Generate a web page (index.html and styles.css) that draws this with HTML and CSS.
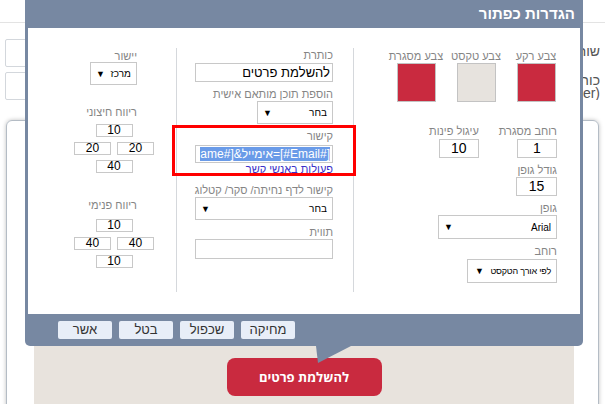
FILE: index.html
```html
<!DOCTYPE html>
<html lang="he" dir="rtl">
<head>
<meta charset="utf-8">
<title>הגדרות כפתור</title>
<link rel="stylesheet" href="styles.css">
</head>
<body>
<div class="page">
  <div class="topbar"></div>
  <div class="formarea">
    <div class="flabels">
      <div class="fl1">שורת נושא</div>
      <div class="fl2">כותרת<br>(placeholder)</div>
    </div>
    <div class="finputs">
      <div class="finput"></div>
      <div class="finput"></div>
    </div>
  </div>
  <div class="card">
    <div class="preview">
      <div class="cta">להשלמת פרטים</div>
    </div>
  </div>
</div>

<div class="modal">
  <div class="mhead">הגדרות כפתור</div>
  <div class="mbody">
    <div class="col colr">
      <div class="swatches">
        <div class="sw"><span class="lbl">צבע רקע</span><span class="chip red"></span></div>
        <div class="sw"><span class="lbl">צבע טקסט</span><span class="chip beige"></span></div>
        <div class="sw"><span class="lbl">צבע מסגרת</span><span class="chip red"></span></div>
      </div>
      <div class="pair">
        <div class="fld"><span class="lbl">רוחב מסגרת</span><div class="inp num">1</div></div>
        <div class="fld"><span class="lbl">עיגול פינות</span><div class="inp num">10</div></div>
      </div>
      <div class="fld f-size"><span class="lbl">גודל גופן</span><div class="inp num">15</div></div>
      <div class="fld f-font"><span class="lbl">גופן</span><div class="inp sel sel-font"><span>Arial</span><i>▼</i></div></div>
      <div class="fld f-width"><span class="lbl">רוחב</span><div class="inp sel sel-width"><span>לפי אורך הטקסט</span><i>▼</i></div></div>
    </div>

    <div class="col colm">
      <span class="lbl">כותרת</span>
      <div class="inp tinp">להשלמת פרטים</div>
      <span class="lbl m-add">הוספת תוכן מותאם אישית</span>
      <div class="inp sel sel-add"><span>בחר</span><i>▼</i></div>
      <div class="linkbox">
        <span class="lbl">קישור</span>
        <div class="inp linkinp"><span class="hl">ame#]&amp;אימייל=[#Email#]</span></div>
        <div class="actions">פעולות באנשי קשר</div>
      </div>
      <span class="lbl m-landing">קישור לדף נחיתה/ סקר/ קטלוג</span>
      <div class="inp sel sel-land"><span>בחר</span><i>▼</i></div>
      <span class="lbl m-tag">תווית</span>
      <div class="inp tag"></div>
    </div>

    <div class="col coll">
      <span class="lbl l-align">יישור</span>
      <div class="inp sel sel-align"><span>מרכז</span><i>▼</i></div>
      <span class="lbl l-out">ריווח חיצוני</span>
      <div class="pgrid">
        <div class="pbox">10</div>
        <div class="prow"><div class="pbox">20</div><div class="pbox">20</div></div>
        <div class="pbox">40</div>
      </div>
      <span class="lbl l-in">ריווח פנימי</span>
      <div class="pgrid pgrid2">
        <div class="pbox">10</div>
        <div class="prow"><div class="pbox">40</div><div class="pbox">40</div></div>
        <div class="pbox">10</div>
      </div>
    </div>
  </div>
  <div class="mfoot">
    <button class="btn">מחיקה</button>
    <button class="btn">שכפול</button>
    <button class="btn">בטל</button>
    <button class="btn">אשר</button>
  </div>
  <svg class="pointer" width="36" height="18" viewBox="0 0 36 18"><polygon points="0,0 35,0 2,17" fill="#7788a2"/></svg>
</div>
</body>
</html>
```

FILE: styles.css
```css
* { box-sizing: border-box; margin: 0; padding: 0; }
html, body { width: 605px; height: 404px; overflow: hidden; }
body {
  font-family: "Liberation Sans", Arial, "DejaVu Sans", sans-serif;
  background: #fff;
  color: #222;
  position: relative;
}

/* background page */
.topbar { height: 23px; border-bottom: 1px solid #e3e3e3; }
.formarea { display: flex; justify-content: space-between; padding-top: 16px; }
.flabels {
  width: 22px;
  padding-right: 5px;
  font-size: 14px;
  color: #555;
  white-space: nowrap;
  overflow: hidden;
}
.fl1 { margin-top: 4px; line-height: 16px; }
.fl2 { margin-top: 15px; line-height: 13px; }
.finputs { width: 300px; margin-left: 5px; }
.finput { height: 28px; border: 1px solid #d3d7dc; border-radius: 2px; margin-bottom: 5px; }
.finput:last-child { margin-bottom: 0; }
.card {
  margin: 20px 6px 0;
  height: 400px;
  border: 1px solid #b4bcc5;
  border-radius: 6px;
  box-shadow: 0 0 4px rgba(0,0,0,.25);
  padding: 20px 24px 0 27px;
}
.preview {
  background: #e8e3dd;
  height: 380px;
  padding-top: 217px;
  display: flex;
  justify-content: center;
  align-items: flex-start;
}
.cta {
  width: 155px;
  height: 38px;
  border-radius: 8px;
  background: #c92a3f;
  color: #fff;
  font: bold 13px "Open Sans", "Liberation Sans", sans-serif;
  display: flex;
  align-items: center;
  justify-content: center;
}

/* modal */
.modal {
  position: absolute;
  top: 0;
  left: 25px;
  width: 558px;
  background: #7788a2;
  padding: 0 3px;
  border-radius: 0 0 5px 5px;
}
.mhead {
  height: 28px;
  line-height: 27px;
  color: #fff;
  font-weight: bold;
  font-size: 15px;
  padding-right: 5px;
}
.mbody { background: #fff; height: 286px; display: flex; align-items: flex-start; }
.col { margin-top: 20px; height: 244px; }
.colr { width: 227px; border-left: 1px solid #d5d8dc; padding: 2px 23px 0 0; }
.colm { width: 177px; border-left: 1px solid #d5d8dc; padding: 0 20px 0 18px; }
.coll { width: 148px; padding: 2px 22px 0 46px; }

.lbl { display: block; font-size: 11px; line-height: 14px; color: #858585; white-space: nowrap; }
.inp { border: 1px solid #c8c8c8; background: #fff; color: #000; }

.swatches { display: flex; gap: 18px; }
.sw { width: 42px; display: flex; flex-direction: column; align-items: center; }
.sw .lbl { line-height: 13px; }
.chip { width: 39px; height: 39px; border: 1px solid #c3c3c3; }
.red { background: #c92a3f; }
.beige { background: #e7e3de; }

.pair { display: flex; gap: 20px; margin-top: 22px; }
.fld { display: flex; flex-direction: column; align-items: flex-start; }
.num { width: 40px; height: 19px; font-size: 14px; line-height: 17px; text-align: center; margin-top: 1px; }
.f-size { margin-top: 5px; }
.f-size .num { margin-top: 0; width: 41px; }
.f-font { margin-top: 5px; }
.f-width { margin-top: 5px; }

.sel {
  display: flex;
  justify-content: space-between;
  align-items: center;
  padding: 0 5px;
  font-size: 10px;
  white-space: nowrap;
}
.sel i { font-style: normal; font-size: 9px; }
.sel-font { width: 119px; height: 24px; }
.sel-width { width: 90px; height: 24px; margin-top: 1px; padding: 0 5px 0 7px; }
.sel-width span { font-size: 9px; letter-spacing: -0.2px; }

.tinp { height: 19px; margin-top: 1px; font-size: 13px; line-height: 17px; padding-right: 2px; }
.m-add { margin-top: 5px; }
.sel-add { width: 76px; height: 23px; }
.linkbox { position: relative; margin-top: 5px; }
.linkbox::after {
  content: "";
  position: absolute;
  top: -4px;
  bottom: -1px;
  left: -23px;
  right: -23px;
  border: 3px solid #ff0000;
}
.linkinp {
  height: 18px;
  margin-top: 2px;
  padding: 1px 2px;
  overflow: hidden;
  white-space: nowrap;
  font-size: 12px;
  line-height: 14px;
}
.hl { background: #6a9be8; color: #fff; unicode-bidi: isolate; direction: ltr; }
.actions { font-size: 11px; line-height: 12px; color: #3a30c8; }
.m-landing { margin-top: 8px; }
.sel-land { height: 23px; }
.m-tag { margin-top: 5px; }
.tag { height: 20px; }

.coll .lbl { padding-right: 17px; }
.l-align { line-height: 12px; }
.sel-align { width: 47px; height: 23px; margin-right: 17px; }
.l-out { margin-top: 20px; }
.pgrid { display: flex; flex-direction: column; align-items: center; gap: 5px; margin-top: 5px; }
.prow { display: flex; gap: 6px; }
.pbox { width: 37px; height: 13px; border: 1px solid #c8c8c8; font-size: 12px; line-height: 11px; text-align: center; color: #000; }
.l-in { margin-top: 25px; }
.pgrid2 { margin-top: 7px; }

.mfoot { height: 32px; display: flex; justify-content: flex-end; gap: 7px; padding: 7px 0 0 30px; }
.btn {
  width: 54px;
  height: 18px;
  border: 0;
  border-radius: 2px;
  background: #e8eef8;
  font: 13px "Liberation Sans", Arial, sans-serif;
  color: #333;
  line-height: 18px;
  padding: 0;
}
.pointer { position: absolute; left: 291px; top: 100%; }
```
